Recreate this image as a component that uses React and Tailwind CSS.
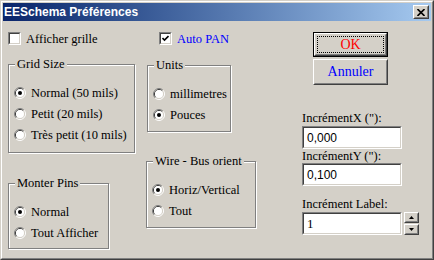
import React from 'react';

const serif = "[font-family:'Liberation_Serif','Times_New_Roman',serif]";
const sans = "[font-family:'Liberation_Sans',Arial,sans-serif]";

const Radio = ({ checked }) => (
  <svg width="12" height="12" viewBox="0 0 12 12" className="shrink-0">
    <path d="M2.11 9.89 A5.5 5.5 0 0 1 9.89 2.11" fill="none" stroke="#808080" />
    <path d="M9.89 2.11 A5.5 5.5 0 0 1 2.11 9.89" fill="none" stroke="#ffffff" />
    <path d="M2.82 9.18 A4.5 4.5 0 0 1 9.18 2.82" fill="none" stroke="#404040" />
    <path d="M9.18 2.82 A4.5 4.5 0 0 1 2.82 9.18" fill="none" stroke="#d4d0c8" />
    <circle cx="6" cy="6" r="4" fill="#ffffff" />
    {checked && <circle cx="6" cy="6" r="2" fill="#000000" />}
  </svg>
);

const Checkbox = ({ checked }) => (
  <div className="w-[13px] h-[13px] shrink-0 border border-t-[#808080] border-l-[#808080] border-b-white border-r-white">
    <div className="w-full h-full bg-white border border-t-[#404040] border-l-[#404040] border-b-[#d4d0c8] border-r-[#d4d0c8] flex items-center justify-center">
      {checked && (
        <svg width="7" height="7" viewBox="0 0 7 7">
          <path d="M0.5 3 L2.5 5 L6.5 1" fill="none" stroke="#000" strokeWidth="1.6" />
        </svg>
      )}
    </div>
  </div>
);

const Sunken = ({ className = '', children }) => (
  <div className={`border border-t-[#808080] border-l-[#808080] border-b-white border-r-white ${className}`}>
    <div className="w-full h-full bg-white border border-t-[#404040] border-l-[#404040] border-b-[#d4d0c8] border-r-[#d4d0c8] flex items-center pl-[3px]">
      {children}
    </div>
  </div>
);

const Raised = ({ className = '', children }) => (
  <div className={`border border-t-white border-l-white border-b-[#404040] border-r-[#404040] bg-[#d4d0c8] ${className}`}>
    <div className="w-full h-full border border-t-[#d4d0c8] border-l-[#d4d0c8] border-b-[#808080] border-r-[#808080] flex items-center justify-center">
      {children}
    </div>
  </div>
);

const Group = ({ label, className = '', children }) => (
  <div className={`relative border border-[#808080] shadow-[inset_1px_1px_0_#fff,1px_1px_0_#fff] pt-[17px] pl-[5px] ${className}`}>
    <span className={`absolute left-[6px] top-[-8px] px-[2px] bg-[#d4d0c8] text-[12.5px] leading-[14px] text-black ${serif}`}>
      {label}
    </span>
    {children}
  </div>
);

const RadioRow = ({ checked, label }) => (
  <div className="h-[21px] flex items-center gap-[5px]">
    <Radio checked={checked} />
    <span className={`text-[12.5px] leading-[14px] text-black whitespace-nowrap ${serif}`}>{label}</span>
  </div>
);

const Label = ({ children, className = '' }) => (
  <div className={`h-[14px] text-[12.5px] leading-[14px] text-black whitespace-nowrap ${serif} ${className}`}>{children}</div>
);

export default function App() {
  return (
    <div className="w-[434px] h-[260px] bg-[#d4d0c8] border border-t-[#d4d0c8] border-l-[#d4d0c8] border-b-[#404040] border-r-[#404040]">
      <div className="w-full h-full border border-t-white border-l-white border-b-[#808080] border-r-[#808080] p-[1px] flex flex-col">
        {/* Title bar */}
        <div className="h-[18px] shrink-0 bg-linear-to-r from-[#0a246a] to-[#a6caf0] flex items-center justify-between pl-[1px] pr-[2px]">
          <span className={`text-white font-bold text-[12px] leading-[14px] ${sans}`}>EESchema Préférences</span>
          <Raised className="w-[16px] h-[14px]">
            <svg width="8" height="7" viewBox="0 0 8 7">
              <path d="M0.5 0 L7.5 7 M7.5 0 L0.5 7" stroke="#000" strokeWidth="1.6" />
            </svg>
          </Raised>
        </div>

        {/* Body */}
        <div className="flex flex-1">
          {/* Left column */}
          <div className="ml-[5px] w-[127px] flex flex-col">
            <div className="mt-[11px] h-[13px] flex items-center gap-[5px]">
              <Checkbox />
              <span className={`text-[12.5px] leading-[14px] text-black whitespace-nowrap ${serif}`}>Afficher grille</span>
            </div>
            <Group label="Grid Size" className="mt-[19px] w-[127px] h-[89px]">
              <RadioRow checked label="Normal (50 mils)" />
              <RadioRow label="Petit (20 mils)" />
              <RadioRow label="Très petit (10 mils)" />
            </Group>
            <Group label="Monter Pins" className="mt-[30px] w-[101px] h-[66px]">
              <RadioRow checked label="Normal" />
              <RadioRow label="Tout Afficher" />
            </Group>
          </div>

          {/* Middle column */}
          <div className="ml-[11px] w-[110px] flex flex-col">
            <div className="ml-[13px] mt-[11px] h-[13px] flex items-center gap-[5px]">
              <Checkbox checked />
              <span className={`text-[12.5px] leading-[14px] text-[#0000ff] whitespace-nowrap ${serif}`}>Auto PAN</span>
            </div>
            <Group label="Units" className="ml-[1px] mt-[20px] w-[84px] h-[67px]">
              <RadioRow label="millimetres" />
              <RadioRow checked label="Pouces" />
            </Group>
            <Group label="Wire - Bus orient" className="mt-[29px] w-[110px] h-[67px]">
              <RadioRow checked label="Horiz/Vertical" />
              <RadioRow label="Tout" />
            </Group>
          </div>

          {/* Right column */}
          <div className="ml-[46px] flex flex-col">
            <div className="ml-[11px] mt-[11px] w-[75px] h-[25px] border border-black">
              <Raised className="w-full h-full relative">
                <div className="absolute inset-[2px] border border-dotted border-black" />
                <span className={`text-[14px] leading-[14px] text-[#ff0000] ${serif}`}>OK</span>
              </Raised>
            </div>
            <Raised className="ml-[11px] mt-[2px] w-[75px] h-[26px]">
              <span className={`text-[14px] leading-[14px] text-[#0000ff] ${serif}`}>Annuler</span>
            </Raised>

            <Label className="mt-[26px]">IncrémentX (&quot;):</Label>
            <Sunken className="mt-[1px] w-[100px] h-[23px]">
              <span className={`text-[12px] text-black ${sans}`}>0,000</span>
            </Sunken>
            <Label>IncrémentY (&quot;):</Label>
            <Sunken className="w-[100px] h-[23px]">
              <span className={`text-[12px] text-black ${sans}`}>0,100</span>
            </Sunken>

            <Label className="mt-[11px]">Incrément Label:</Label>
            <div className="mt-[1px] flex items-center gap-[2px]">
              <Sunken className="w-[100px] h-[23px]">
                <span className={`text-[13px] text-black ${serif}`}>1</span>
              </Sunken>
              <div className="flex flex-col gap-[1px]">
                <Raised className="w-[15px] h-[11px]">
                  <svg width="5" height="3" viewBox="0 0 5 3"><path d="M0 3 L2.5 0 L5 3 Z" fill="#000" /></svg>
                </Raised>
                <Raised className="w-[15px] h-[11px]">
                  <svg width="5" height="3" viewBox="0 0 5 3"><path d="M0 0 L2.5 3 L5 0 Z" fill="#000" /></svg>
                </Raised>
              </div>
            </div>
          </div>
        </div>
      </div>
    </div>
  );
}
